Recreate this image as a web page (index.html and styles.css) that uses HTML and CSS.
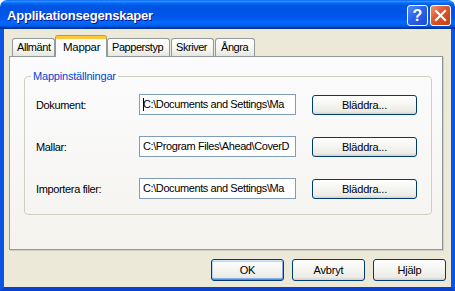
FILE: index.html
```html
<!DOCTYPE html>
<html lang="sv">
  <head>
    <meta charset="UTF-8" />
    <title>Applikationsegenskaper</title>
    <link rel="stylesheet" href="styles.css">
  </head>
  <body>
    <div class="window">
      <div class="titlebar">
        <span class="title">Applikationsegenskaper</span>
        <div class="caption-buttons">
          <div class="cap help">?</div>
          <div class="cap close">
            <svg width="13" height="13" viewBox="0 0 13 13">
              <path d="M2 2 L11 11 M11 2 L2 11" stroke="#fff" stroke-width="2.2" stroke-linecap="square" />
            </svg>
          </div>
        </div>
      </div>

      <div class="client">
        <div class="tabs">
          <div class="tab tab-allmant">Allmänt</div>
          <div class="tab tab-mappar active">Mappar</div>
          <div class="tab tab-papper">Papperstyp</div>
          <div class="tab tab-skriver">Skriver</div>
          <div class="tab tab-angra">Ångra</div>
        </div>

        <div class="panel">
          <fieldset class="group">
            <legend>Mappinställningar</legend>
            <div class="rows">
              <div class="row">
                <span class="label">Dokument:</span>
                <div class="field"><span class="caret"></span>C:\Documents and Settings\Ma</div>
                <div class="btn">Bläddra...</div>
              </div>
              <div class="row">
                <span class="label">Mallar:</span>
                <div class="field">C:\Program Files\Ahead\CoverD</div>
                <div class="btn">Bläddra...</div>
              </div>
              <div class="row">
                <span class="label">Importera filer:</span>
                <div class="field">C:\Documents and Settings\Ma</div>
                <div class="btn">Bläddra...</div>
              </div>
            </div>
          </fieldset>
        </div>

        <div class="actions">
          <div class="btn btn-wide default">OK</div>
          <div class="btn btn-wide">Avbryt</div>
          <div class="btn btn-wide">Hjälp</div>
        </div>
      </div>
    </div>
  </body>
</html>
```

FILE: styles.css
```css
body {
  margin: 0;
  background: #ffffff;
  font-family: "Liberation Sans", Arial, sans-serif;
  font-size: 11px;
  color: #000;
}

.window {
  width: 455px;
  height: 291px;
  display: flex;
  flex-direction: column;
}

/* title bar */
.titlebar {
  height: 29px;
  box-sizing: border-box;
  display: flex;
  justify-content: space-between;
  align-items: flex-start;
  padding: 0 4px 0 7px;
  border-radius: 7px 7px 0 0;
  background: linear-gradient(
    to bottom,
    #0058ee 0%,
    #3593ff 4%,
    #288eff 6%,
    #127dff 8%,
    #036ffc 10%,
    #0262ee 14%,
    #0057e5 20%,
    #0054e3 24%,
    #0055eb 56%,
    #005bf5 66%,
    #026afe 76%,
    #0062ef 86%,
    #0052d6 92%,
    #0040ab 94%,
    #003092 100%
  );
}

.title {
  color: #fff;
  font-weight: bold;
  font-size: 13px;
  letter-spacing: -0.2px;
  line-height: 15px;
  padding-top: 8px;
  text-shadow: 1px 1px #0f1089;
}

.caption-buttons {
  display: flex;
  gap: 2px;
  padding-top: 5px;
}

.cap {
  width: 21px;
  height: 21px;
  box-sizing: border-box;
  border: 1px solid #fff;
  border-radius: 3px;
  display: flex;
  align-items: center;
  justify-content: center;
}

.help {
  background: linear-gradient(135deg, #5a8cf8 0%, #2a63ea 45%, #1a4fd6 100%);
  color: #fff;
  font-weight: bold;
  font-size: 16px;
  line-height: 16px;
}

.close {
  background: linear-gradient(135deg, #f0906c 0%, #e0542a 45%, #c4400f 100%);
}

/* client area */
.client {
  flex: 1;
  background: #ece9d8;
  border: 4px solid #0a55e6;
  border-top: 0;
  border-bottom-color: #0841d0;
  padding: 7px 0 0 5px;
  display: flex;
  flex-direction: column;
}

.tabs {
  display: flex;
  align-items: flex-end;
  height: 20px;
  margin-left: 3px;
}

.tab {
  height: 18px;
  box-sizing: border-box;
  border: 1px solid #919b9c;
  border-bottom: 0;
  border-radius: 3px 3px 0 0;
  background: linear-gradient(#ffffff, #f3f3ef 70%, #e6e5dd);
  padding-left: 4px;
  line-height: 17px;
  letter-spacing: -0.45px;
  white-space: nowrap;
  overflow: hidden;
}

.tab.active {
  height: 21px;
  margin-bottom: -1px;
  position: relative;
  z-index: 1;
  background: #fcfcfe;
  border-top: 3px solid #ffc83c;
  box-shadow: 0 -1px 0 #e68b2c;
  padding-left: 7px;
  line-height: 17px;
  font-size: 11.5px;
  letter-spacing: -0.3px;
}

.tab-allmant { width: 43px; }
.tab-mappar { width: 52px; }
.tab-papper { width: 63px; margin-right: 1px; }
.tab-skriver { width: 43px; margin-right: 1px; }
.tab-angra { width: 40px; padding-left: 5px; }

.panel {
  width: 434px;
  height: 194px;
  box-sizing: border-box;
  border: 1px solid #919b9c;
  border-right-color: #8b9596;
  box-shadow: 1px 1px 0 #d0cec1;
  background: linear-gradient(#fcfcfe, #f4f3ee);
  padding: 13px 0 0 14px;
}

.group {
  width: 408px;
  height: 145px;
  box-sizing: border-box;
  margin: 0;
  border: 1px solid #d0d0bf;
  border-radius: 4px;
  padding: 0 0 0 11px;
}

.group legend {
  color: #0046d5;
  padding: 0 2px;
  margin-left: -5px;
  line-height: 13px;
  letter-spacing: -0.2px;
}

.rows {
  margin-top: 11px;
  display: flex;
  flex-direction: column;
  gap: 21px;
}

.row {
  height: 21px;
  display: flex;
  align-items: center;
}

.label {
  width: 103px;
  letter-spacing: -0.35px;
}

.field {
  width: 157px;
  height: 21px;
  box-sizing: border-box;
  border: 1px solid #7f9db9;
  background: #fff;
  padding: 0 0 0 3px;
  line-height: 19px;
  white-space: nowrap;
  overflow: hidden;
  letter-spacing: -0.4px;
  position: relative;
}

.caret {
  position: absolute;
  left: 3px;
  top: 3px;
  width: 1px;
  height: 13px;
  background: #000;
}

.btn {
  width: 105px;
  height: 20px;
  box-sizing: border-box;
  margin-left: 16px;
  margin-top: 1px;
  border: 1px solid #003c74;
  border-radius: 3px;
  background: linear-gradient(#ffffff, #f4f4f0 50%, #ecebe6 85%, #d6d0c5);
  text-align: center;
  line-height: 18px;
  letter-spacing: -0.2px;
}

.actions {
  display: flex;
  justify-content: flex-end;
  gap: 8px;
  margin-top: 9px;
  padding-right: 5px;
}

.btn-wide {
  width: 73px;
  height: 22px;
  margin: 0;
  line-height: 20px;
}

.btn.default {
  box-shadow: inset 0 1px 0 #cee7ff, inset 0 -1px 0 #6982ee, inset 1px 0 0 #b8d0f7,
    inset -1px 0 0 #8aa8ec, inset 0 2px 0 #bcd4f6, inset 0 -2px 0 #89ade4;
}
```
